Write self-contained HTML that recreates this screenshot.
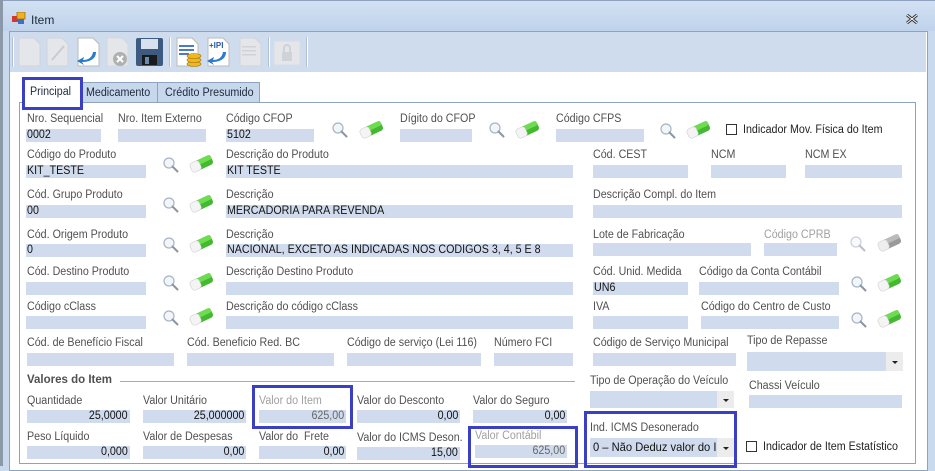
<!DOCTYPE html>
<html><head><meta charset="utf-8">
<style>
*{margin:0;padding:0;box-sizing:border-box}
body{width:935px;height:466px;overflow:hidden;background:#c9d9ee;font-family:"Liberation Sans",Arial,sans-serif;font-size:11px;color:#444;position:relative}
.a{position:absolute}
.l{position:absolute;white-space:nowrap;font-size:11.5px;color:#505050;line-height:13px;transform:scaleX(.93);transform-origin:left}
.g{color:#a0a0a0}
.f{position:absolute;height:13px;background:#d0dcee;font-size:11.5px;color:#111;line-height:13px;padding-left:1px;white-space:nowrap;overflow:hidden}
.f span{display:inline-block;transform:scaleX(.93);transform-origin:left}
.r{text-align:right;padding-right:2px}
.r span{transform-origin:right}
.box{position:absolute;border:3px solid #3b3fc4}
.cb{position:absolute;width:11px;height:11px;border:1px solid #333;background:#fff}
.dd{position:absolute;width:17px;background:#ececec}
.dd:after{content:"";position:absolute;left:6px;top:50%;margin-top:-1px;border-left:3px solid transparent;border-right:3px solid transparent;border-top:3px solid #222}
.sep{position:absolute;top:37px;width:2px;height:30px;background:#b0c0d8;border-right:1px solid #fff}
.tab{position:absolute;white-space:nowrap;background:#c7d7ec;border:1px solid #8ea3c0;font-size:11.5px;color:#1e2a3a;line-height:13px}
.tab span{display:inline-block;transform:scaleX(.93);transform-origin:left}
</style></head><body>
<div class="a" style="left:0;top:0;width:935px;height:31px;background:linear-gradient(#d3e1f2,#bfd3ec)"></div>
<div class="a" style="left:0;top:0;width:935px;height:1px;background:#8fa2bd"></div>
<div class="a" style="left:0;top:0;width:3px;height:466px;background:#8a98a8"></div>
<svg class="a" style="left:12px;top:12px" width="14" height="13"><rect x="0" y="4" width="6" height="6" fill="#d03a2a"/><rect x="5" y="0" width="8" height="7" fill="#f0b020" stroke="#a07010" stroke-width=".8"/><rect x="6" y="7" width="6" height="5" fill="#3a70c8"/></svg>
<div class="a" style="left:31px;top:13px;font-size:12px;color:#1e2a3a">Item</div>
<svg class="a" style="left:906px;top:14px" width="12" height="10"><path d="M1 1l10 8M11 1L1 9" stroke="#333" stroke-width="3"/><path d="M1 1l10 8M11 1L1 9" stroke="#fff" stroke-width="1"/></svg>
<div class="a" style="left:9px;top:31px;width:919px;height:440px;background:#fff;border:1px solid #8ea3c0"></div>
<div class="a" style="left:10px;top:32px;width:916px;height:40px;background:#cfdcee"></div>
<div class="sep" style="left:12px"></div><div class="sep" style="left:169px"></div><div class="sep" style="left:268px"></div><div class="sep" style="left:306px"></div>
<svg class="a" style="left:16px;top:36px" width="300" height="32">
<g fill="#e4e6ea" stroke="#d0d4da"><path d="M3 2h15l6 6v22H3z"/><path d="M31 2h15l6 6v22H31z"/></g>
<path d="M36 24l12-14" stroke="#c8ccd2" stroke-width="2"/>
<path d="M62 2h15l6 6v22H62z" fill="#fff" stroke="#bbb"/><path d="M80 16c0 8-8 10-14 10l2 3-7-4 7-4-1 3c5 0 9-2 10-8z" fill="#2a7ad0"/>
<path d="M91 2h15l6 6v22H91z" fill="#e4e6ea" stroke="#d4d8dc"/><circle cx="104" cy="23" r="7" fill="#b0b0b0"/><path d="M101 20l6 6M107 20l-6 6" stroke="#fff" stroke-width="2"/>
<rect x="120" y="2" width="27" height="28" rx="2" fill="#3d5a80"/><rect x="125" y="3" width="17" height="10" fill="#d8e2ee"/><rect x="126" y="19" width="15" height="10" fill="#1a1a1a"/><rect x="129" y="21" width="4" height="7" fill="#6a8ab0"/>
<path d="M161 2h15l6 6v22H161z" fill="#fff" stroke="#bbb"/><g fill="#4a7ad0"><rect x="163" y="9" width="15" height="2"/><rect x="163" y="13" width="15" height="2"/><rect x="163" y="17" width="10" height="2"/></g><g fill="#f0b820" stroke="#a07008" stroke-width=".6"><ellipse cx="178" cy="28" rx="7" ry="2.5"/><ellipse cx="178" cy="24" rx="7" ry="2.5"/><ellipse cx="178" cy="20" rx="7" ry="2.5"/></g>
<path d="M192 2h15l6 6v22H192z" fill="#fff" stroke="#bbb"/><text x="193" y="12" font-size="8" font-weight="bold" fill="#2a5aa0" font-family="Liberation Sans">+IPI</text><path d="M210 16c0 8-8 10-14 10l2 3-7-4 7-4-1 3c5 0 9-2 10-8z" fill="#2a7ad0"/>
<path d="M224 2h15l6 6v22H224z" fill="#e4e6ea" stroke="#d0d4da"/><g fill="#cfd3d8"><rect x="226" y="10" width="14" height="1.5"/><rect x="226" y="14" width="14" height="1.5"/><rect x="226" y="18" width="14" height="1.5"/></g>
<rect x="258" y="5" width="26" height="24" fill="#e4e6ea" stroke="#d8dce0"/><rect x="266" y="16" width="10" height="9" fill="#cfd3d8"/><path d="M268 16v-4a3 3 0 016 0v4" stroke="#cfd3d8" stroke-width="2" fill="none"/>
</svg>
<div class="a" style="left:19px;top:102px;width:897px;height:362px;border:1px solid #8ea3c0"></div>
<div class="tab" style="left:80px;top:82px;width:78px;height:21px;padding:4px 0 0 5px"><span>Medicamento</span></div>
<div class="tab" style="left:157px;top:82px;width:103px;height:21px;padding:4px 0 0 7px"><span>Crédito Presumido</span></div>
<div class="a" style="left:25px;top:80px;width:55px;height:25px;background:#fff;font-size:11.5px;color:#1e2a3a;padding:6px 0 0 5px;white-space:nowrap"><span style="display:inline-block;transform:scaleX(.93);transform-origin:left">Principal</span></div>
<div class="box" style="left:22px;top:77px;width:61px;height:33px"></div>

<div class="l" style="left:27px;top:113px">Nro. Sequencial</div><div class="f" style="left:26px;top:129px;width:75px"><span>0002</span></div>
<div class="l" style="left:118px;top:113px">Nro. Item Externo</div><div class="f" style="left:118px;top:129px;width:88px"></div>
<div class="l" style="left:226px;top:113px">Código CFOP</div><div class="f" style="left:226px;top:129px;width:88px"><span>5102</span></div>
<div class="l" style="left:400px;top:113px">Dígito do CFOP</div><div class="f" style="left:400px;top:129px;width:72px"></div>
<div class="l" style="left:556px;top:113px">Código CFPS</div><div class="f" style="left:556px;top:129px;width:88px"></div>
<div class="cb" style="left:726px;top:124px"></div><div class="l" style="left:743px;top:124px;color:#222">Indicador Mov. Física do Item</div>
<div class="l" style="left:27px;top:149px">Código do Produto</div><div class="f" style="left:26px;top:165px;width:120px"><span>KIT_TESTE</span></div>
<div class="l" style="left:226px;top:149px">Descrição do Produto</div><div class="f" style="left:226px;top:165px;width:347px"><span>KIT TESTE</span></div>
<div class="l" style="left:593px;top:149px">Cód. CEST</div><div class="f" style="left:593px;top:165px;width:95px"></div>
<div class="l" style="left:711px;top:149px">NCM</div><div class="f" style="left:711px;top:165px;width:75px"></div>
<div class="l" style="left:805px;top:149px">NCM EX</div><div class="f" style="left:805px;top:165px;width:97px"></div>
<div class="l" style="left:27px;top:189px">Cód. Grupo Produto</div><div class="f" style="left:26px;top:205px;width:120px"><span>00</span></div>
<div class="l" style="left:226px;top:189px">Descrição</div><div class="f" style="left:226px;top:205px;width:347px"><span>MERCADORIA PARA REVENDA</span></div>
<div class="l" style="left:593px;top:189px">Descrição Compl. do Item</div><div class="f" style="left:593px;top:205px;width:309px"></div>
<div class="l" style="left:27px;top:229px">Cód. Origem Produto</div><div class="f" style="left:26px;top:244px;width:120px"><span>0</span></div>
<div class="l" style="left:226px;top:229px">Descrição</div><div class="f" style="left:226px;top:244px;width:347px"><span>NACIONAL, EXCETO AS INDICADAS NOS CÓDIGOS 3, 4, 5 E 8</span></div>
<div class="l" style="left:593px;top:229px">Lote de Fabricação</div><div class="f" style="left:593px;top:243px;width:158px"></div>
<div class="l g" style="left:764px;top:229px">Código CPRB</div><div class="f" style="left:764px;top:243px;width:73px"></div>
<div class="l" style="left:27px;top:266px">Cód. Destino Produto</div><div class="f" style="left:26px;top:282px;width:120px"></div>
<div class="l" style="left:226px;top:266px">Descrição Destino Produto</div><div class="f" style="left:226px;top:282px;width:347px"></div>
<div class="l" style="left:593px;top:266px">Cód. Unid. Medida</div><div class="f" style="left:593px;top:282px;width:95px"><span>UN6</span></div>
<div class="l" style="left:699px;top:266px">Código da Conta Contábil</div><div class="f" style="left:699px;top:282px;width:140px"></div>
<div class="l" style="left:27px;top:301px">Código cClass</div><div class="f" style="left:26px;top:316px;width:120px"></div>
<div class="l" style="left:226px;top:301px">Descrição do código cClass</div><div class="f" style="left:226px;top:316px;width:347px"></div>
<div class="l" style="left:593px;top:301px">IVA</div><div class="f" style="left:593px;top:316px;width:95px"></div>
<div class="l" style="left:701px;top:301px">Código do Centro de Custo</div><div class="f" style="left:701px;top:316px;width:138px"></div>
<div class="l" style="left:27px;top:337px">Cód. de Benefício Fiscal</div><div class="f" style="left:27px;top:353px;width:147px"></div>
<div class="l" style="left:187px;top:337px">Cód. Beneficio Red. BC</div><div class="f" style="left:187px;top:353px;width:147px"></div>
<div class="l" style="left:347px;top:337px">Código de serviço (Lei 116)</div><div class="f" style="left:347px;top:353px;width:134px"></div>
<div class="l" style="left:494px;top:337px">Número FCI</div><div class="f" style="left:494px;top:353px;width:79px"></div>
<div class="l" style="left:593px;top:337px">Código de Serviço Municipal</div><div class="f" style="left:593px;top:353px;width:143px"></div>
<div class="l" style="left:747px;top:335px">Tipo de Repasse</div><div class="f" style="left:747px;top:352px;width:140px;height:19px"></div><div class="dd" style="left:886px;top:352px;height:19px"></div>
<div class="a" style="left:27px;top:374px;font-size:11.5px;font-weight:bold;color:#505050">Valores do Item</div>
<div class="a" style="left:120px;top:381px;width:455px;height:1px;background:#aaa"></div>
<div class="l" style="left:590px;top:375px">Tipo de Operação do Veículo</div><div class="f" style="left:590px;top:391px;width:128px;height:17px"></div><div class="dd" style="left:717px;top:391px;height:17px"></div>
<div class="l" style="left:749px;top:380px">Chassi Veículo</div><div class="f" style="left:749px;top:395px;width:153px"></div>
<div class="l" style="left:27px;top:395px">Quantidade</div><div class="f r" style="left:27px;top:410px;width:103px"><span>25,0000</span></div>
<div class="l" style="left:143px;top:395px">Valor Unitário</div><div class="f r" style="left:143px;top:410px;width:103px"><span>25,000000</span></div>
<div class="l g" style="left:259px;top:395px">Valor do Item</div><div class="f r" style="left:259px;top:410px;width:87px;color:#666"><span>625,00</span></div>
<div class="l" style="left:357px;top:395px">Valor do Desconto</div><div class="f r" style="left:357px;top:410px;width:103px"><span>0,00</span></div>
<div class="l" style="left:473px;top:395px">Valor do Seguro</div><div class="f r" style="left:473px;top:410px;width:94px"><span>0,00</span></div>
<div class="box" style="left:252px;top:385px;width:101px;height:44px"></div>
<div class="l" style="left:27px;top:431px">Peso Líquido</div><div class="f r" style="left:27px;top:446px;width:103px"><span>0,000</span></div>
<div class="l" style="left:143px;top:431px">Valor de Despesas</div><div class="f r" style="left:143px;top:446px;width:103px"><span>0,00</span></div>
<div class="l" style="left:259px;top:431px">Valor do &nbsp;Frete</div><div class="f r" style="left:259px;top:446px;width:87px"><span>0,00</span></div>
<div class="l" style="left:357px;top:432px">Valor do ICMS Deson.</div><div class="f r" style="left:357px;top:447px;width:103px"><span>15,00</span></div>
<div class="l g" style="left:475px;top:430px">Valor Contábil</div><div class="f r" style="left:475px;top:445px;width:92px;color:#666"><span>625,00</span></div>
<div class="box" style="left:468px;top:426px;width:110px;height:42px"></div>
<div class="l" style="left:590px;top:422px">Ind. ICMS Desonerado</div>
<div class="f" style="left:590px;top:438px;width:128px;height:19px;line-height:19px;font-size:12px;padding-left:3px"><span>0 – Não Deduz valor do ICMS</span></div><div class="dd" style="left:717px;top:438px;height:19px"></div>
<div class="box" style="left:584px;top:411px;width:153px;height:57px"></div>
<div class="cb" style="left:746px;top:441px"></div><div class="l" style="left:763px;top:441px;color:#222">Indicador de Item Estatístico</div>

<svg class="a" style="left:0;top:0" width="935" height="466">
<defs>
<g id="m"><circle cx="6" cy="6" r="5" fill="#f2f6fb" stroke="#a8b4c2" stroke-width="1.2"/><path d="M9.5 9.5l5 5" stroke="#8a96a4" stroke-width="2" stroke-linecap="round"/></g>
<g id="e"><g transform="rotate(-25 12 9)"><rect x="1" y="4" width="23" height="10" rx="3" fill="#44b830"/><rect x="10" y="4" width="14" height="5" rx="2" fill="#6edc50"/><rect x="1" y="4" width="10" height="10" rx="3" fill="#f4f4f4" stroke="#cfcfcf" stroke-width=".6"/></g></g>
<g id="eg"><g transform="rotate(-25 12 9)"><rect x="1" y="4" width="23" height="10" rx="3" fill="#9a9a9a"/><rect x="10" y="4" width="14" height="5" rx="2" fill="#bbb"/><rect x="1" y="4" width="10" height="10" rx="3" fill="#eee" stroke="#cfcfcf" stroke-width=".6"/></g></g>
</defs>
<use href="#m" x="332" y="122"/><use href="#e" x="359" y="121"/>
<use href="#m" x="489" y="122"/><use href="#e" x="515" y="121"/>
<use href="#m" x="660" y="123"/><use href="#e" x="686" y="121"/>
<use href="#m" x="163" y="157"/><use href="#e" x="189" y="155"/>
<use href="#m" x="163" y="197"/><use href="#e" x="189" y="195"/>
<use href="#m" x="163" y="237"/><use href="#e" x="189" y="235"/>
<use href="#m" x="163" y="275"/><use href="#e" x="189" y="273"/>
<use href="#m" x="163" y="310"/><use href="#e" x="189" y="308"/>
<g opacity=".6"><use href="#m" x="850" y="236"/></g><use href="#eg" x="877" y="234"/>
<use href="#m" x="851" y="276"/><use href="#e" x="877" y="274"/>
<use href="#m" x="851" y="312"/><use href="#e" x="877" y="310"/>
</svg>
</body></html>
